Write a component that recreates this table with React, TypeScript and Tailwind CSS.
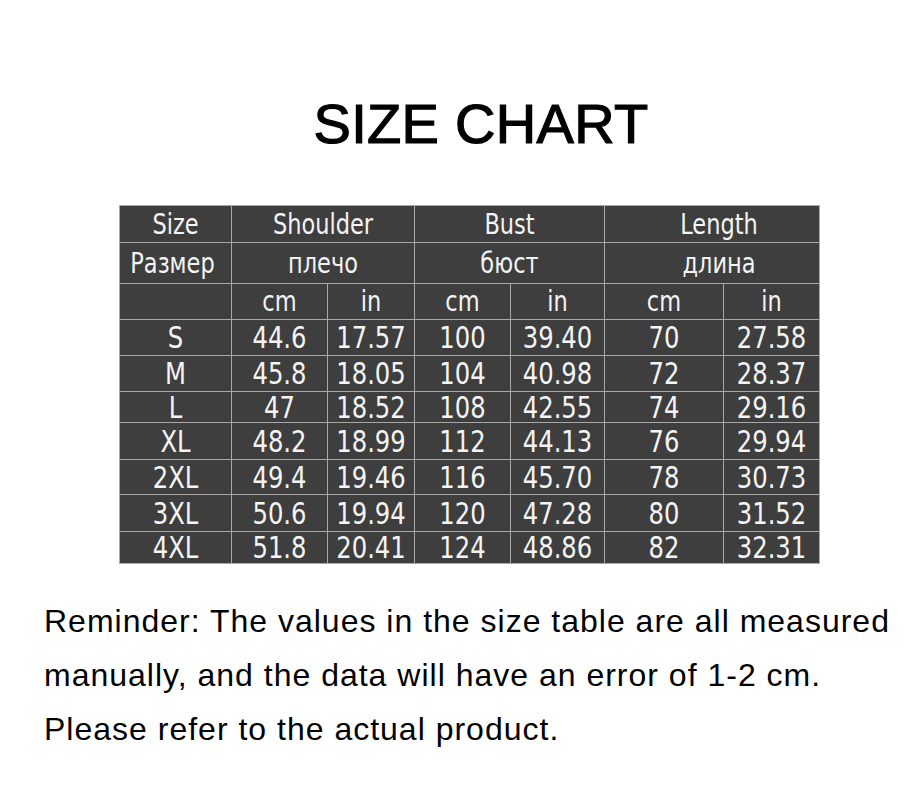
import React from 'react';

const rows: string[][] = [
  ['S', '44.6', '17.57', '100', '39.40', '70', '27.58'],
  ['M', '45.8', '18.05', '104', '40.98', '72', '28.37'],
  ['L', '47', '18.52', '108', '42.55', '74', '29.16'],
  ['XL', '48.2', '18.99', '112', '44.13', '76', '29.94'],
  ['2XL', '49.4', '19.46', '116', '45.70', '78', '30.73'],
  ['3XL', '50.6', '19.94', '120', '47.28', '80', '31.52'],
  ['4XL', '51.8', '20.41', '124', '48.86', '82', '32.31'],
];

const rowHeights = ['h-[36px]', 'h-[36px]', 'h-[31px]', 'h-[37px]', 'h-[35px]', 'h-[37px]', 'h-[32px]'];

const cell = 'border border-[#a8a8a8] text-center p-0 align-middle';

function Txt({ children }: { children: React.ReactNode }) {
  return <span className="inline-block scale-y-[1.1]">{children}</span>;
}

export default function App() {
  return (
    <div className="w-[912px] h-[800px] bg-white overflow-hidden font-['Liberation_Sans',Arial,sans-serif] text-black">
      <div className="pt-[96px] pl-[50px] text-center">
        <h1 className="text-[56px] leading-none font-normal tracking-[0.3px] [-webkit-text-stroke:1.2px_black]">SIZE CHART</h1>
      </div>

      <div className="mt-[53px] ml-[119px]">
        <table className="table-fixed border-collapse bg-[#3e3e3e] text-[#f4f4f4] font-['DejaVu_Sans_Condensed','DejaVu_Sans',sans-serif] font-stretch-semi-condensed">
          <colgroup>
            <col className="w-[112px]" />
            <col className="w-[96px]" />
            <col className="w-[87px]" />
            <col className="w-[96px]" />
            <col className="w-[94px]" />
            <col className="w-[119px]" />
            <col className="w-[96px]" />
          </colgroup>
          <tbody className="text-[25px] leading-none">
            <tr className="h-[37px]">
              <td className={cell}><Txt>Size</Txt></td>
              <td className={cell} colSpan={2}><Txt>Shoulder</Txt></td>
              <td className={cell} colSpan={2}><Txt>Bust</Txt></td>
              <td className={`${cell} pl-[14px]`} colSpan={2}><Txt>Length</Txt></td>
            </tr>
            <tr className="h-[41px]">
              <td className={`${cell} pr-[6px]`}><Txt>Размер</Txt></td>
              <td className={cell} colSpan={2}><Txt>плечо</Txt></td>
              <td className={cell} colSpan={2}><Txt>бюст</Txt></td>
              <td className={`${cell} pl-[14px]`} colSpan={2}><Txt>длина</Txt></td>
            </tr>
            <tr className="h-[36px]">
              <td className={cell}></td>
              <td className={cell}><Txt>cm</Txt></td>
              <td className={cell}><Txt>in</Txt></td>
              <td className={cell}><Txt>cm</Txt></td>
              <td className={cell}><Txt>in</Txt></td>
              <td className={cell}><Txt>cm</Txt></td>
              <td className={cell}><Txt>in</Txt></td>
            </tr>
          </tbody>
          <tbody className="text-[27px] leading-none">
            {rows.map((r, i) => (
              <tr key={r[0]} className={rowHeights[i]}>
                {r.map((v, j) => (
                  <td key={j} className={cell}><Txt>{v}</Txt></td>
                ))}
              </tr>
            ))}
          </tbody>
        </table>
      </div>

      <div className="mt-[30px] pl-[44px] text-[32px] leading-[54px] tracking-[1px] whitespace-nowrap">
        <p>Reminder: The values in the size table are all measured</p>
        <p>manually, and the data will have an error of 1-2 cm.</p>
        <p>Please refer to the actual product.</p>
      </div>
    </div>
  );
}
